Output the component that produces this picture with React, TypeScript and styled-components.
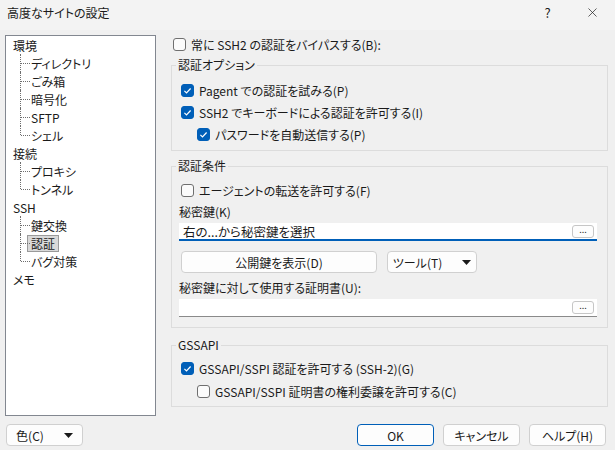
import React from "react";
import styled, { createGlobalStyle } from "styled-components";
import { X } from "lucide-react";

const GlobalStyle = createGlobalStyle`
  html, body {
    margin: 0;
    padding: 0;
    background: #f0f0f0;
  }
  body {
    font-family: "Noto Sans CJK JP", "Noto Sans", sans-serif;
    font-size: 12px;
    color: #1a1a1a;
    font-feature-settings: "palt";
  }
`;

type TreeNode = {
  label: string;
  children?: string[];
};

const treeData: TreeNode[] = [
  { label: "環境", children: ["ディレクトリ", "ごみ箱", "暗号化", "SFTP", "シェル"] },
  { label: "接続", children: ["プロキシ", "トンネル"] },
  { label: "SSH", children: ["鍵交換", "認証", "バグ対策"] },
  { label: "メモ" },
];

const SELECTED = "認証";

const CheckMark = () => (
  <svg width="13" height="13" viewBox="0 0 13 13">
    <path d="M3.4 6.9 L5.5 8.9 L9.6 4.5" fill="none" stroke="#fff" strokeWidth="1.2" />
  </svg>
);

const Caret = () => (
  <svg width="9" height="5" viewBox="0 0 9 5">
    <path d="M0 0 H9 L4.5 5 Z" fill="#1a1a1a" />
  </svg>
);

const CheckBox: React.FC<{ checked?: boolean }> = ({ checked }) => (
  <Box $checked={!!checked}>{checked && <CheckMark />}</Box>
);

const App: React.FC = () => {
  return (
    <Window>
      <GlobalStyle />
      <TitleBar>
        <Title>高度なサイトの設定</Title>
        <TitleButton>?</TitleButton>
        <TitleButton>
          <X size={15} strokeWidth={1.1} />
        </TitleButton>
      </TitleBar>

      <Body>
        <Tree>
          {treeData.map((node) => (
            <React.Fragment key={node.label}>
              <TreeRow>
                <TreeLabel $selected={false}>{node.label}</TreeLabel>
              </TreeRow>
              {node.children?.map((child, i) => (
                <TreeRow key={child} $child>
                  <Connector $last={i === node.children!.length - 1} />
                  <TreeLabel $selected={child === SELECTED}>{child}</TreeLabel>
                </TreeRow>
              ))}
            </React.Fragment>
          ))}
        </Tree>

        <RightPanel>
          <CheckRow $h={16} $top={1}>
            <CheckBox />
            常に SSH2 の認証をバイパスする(B):
          </CheckRow>

          <Group $top={5} $pt={6} $pb={5}>
            <Legend>認証オプション</Legend>
            <CheckRow>
              <CheckBox checked />
              Pagent での認証を試みる(P)
            </CheckRow>
            <CheckRow>
              <CheckBox checked />
              SSH2 でキーボードによる認証を許可する(I)
            </CheckRow>
            <CheckRow $indent={16}>
              <CheckBox checked />
              パスワードを自動送信する(P)
            </CheckRow>
          </Group>

          <Group $top={7} $pt={5} $pb={10}>
            <Legend>認証条件</Legend>
            <CheckRow>
              <CheckBox />
              エージェントの転送を許可する(F)
            </CheckRow>
            <FieldLabel>秘密鍵(K)</FieldLabel>
            <Field $focused>
              <FieldText>右の...から秘密鍵を選択</FieldText>
              <BrowseButton>...</BrowseButton>
            </Field>
            <ButtonRow>
              <Button $w={196}>公開鍵を表示(D)</Button>
              <Button $w={90}>
                <span>ツール(T)</span>
                <Caret />
              </Button>
            </ButtonRow>
            <FieldLabel $top={6}>秘密鍵に対して使用する証明書(U):</FieldLabel>
            <Field>
              <FieldText />
              <BrowseButton>...</BrowseButton>
            </Field>
          </Group>

          <Group $top={9} $pt={4} $pb={3}>
            <Legend>GSSAPI</Legend>
            <CheckRow $h={23}>
              <CheckBox checked />
              GSSAPI/SSPI 認証を許可する (SSH-2)(G)
            </CheckRow>
            <CheckRow $h={23} $indent={16}>
              <CheckBox />
              GSSAPI/SSPI 証明書の権利委譲を許可する(C)
            </CheckRow>
          </Group>
        </RightPanel>
      </Body>

      <Footer>
        <Button $w={77}>
          <span>色(C)</span>
          <Caret />
        </Button>
        <Spacer />
        <Button $w={77} $primary>
          OK
        </Button>
        <Button $w={77}>キャンセル</Button>
        <Button $w={77}>ヘルプ(H)</Button>
      </Footer>
    </Window>
  );
};

const Window = styled.div`
  width: 615px;
  height: 450px;
  display: flex;
  flex-direction: column;
  overflow: hidden;
  background: #f0f0f0;
`;

const TitleBar = styled.div`
  height: 30px;
  display: flex;
  align-items: center;
  background: #f3f3f3;
  padding-left: 7px;
`;

const Title = styled.div`
  flex: 1;
  font-size: 12px;
  margin-top: -5px;
`;

const TitleButton = styled.div`
  width: 45px;
  height: 30px;
  display: flex;
  align-items: center;
  justify-content: center;
  font-size: 13px;
  margin-top: -6px;
  color: #1a1a1a;
`;

const Body = styled.div`
  display: flex;
  gap: 15px;
  padding: 5px 7px 0 5px;
`;

const Tree = styled.div`
  width: 151px;
  height: 381px;
  box-sizing: border-box;
  background: #fff;
  border: 1px solid #828790;
  padding-left: 6px;
`;

const TreeRow = styled.div<{ $child?: boolean }>`
  height: 18px;
  display: flex;
  align-items: center;
  padding-left: ${(p) => (p.$child ? 8 : 0)}px;
`;

const Connector = styled.span<{ $last: boolean }>`
  position: relative;
  align-self: stretch;
  width: 10px;
  flex: none;

  &::before {
    content: "";
    position: absolute;
    left: 0;
    top: 0;
    height: ${(p) => (p.$last ? "50%" : "100%")};
    border-left: 1px dotted #6e6e6e;
  }

  &::after {
    content: "";
    position: absolute;
    left: 1px;
    top: 50%;
    width: 9px;
    border-top: 1px dotted #6e6e6e;
  }
`;

const TreeLabel = styled.span<{ $selected: boolean }>`
  height: 17px;
  line-height: 16px;
  padding: 0 3px;
  margin-left: -3px;
  box-sizing: border-box;
  border: 1px solid ${(p) => (p.$selected ? "#9a9a9a" : "transparent")};
  background: ${(p) => (p.$selected ? "#d9d9d9" : "transparent")};
  font-size: 12px;
  white-space: nowrap;
`;

const RightPanel = styled.div`
  width: 437px;
  display: flex;
  flex-direction: column;
`;

const CheckRow = styled.label<{ $h?: number; $indent?: number; $top?: number }>`
  display: flex;
  align-items: center;
  gap: 5px;
  height: ${(p) => p.$h ?? 22}px;
  margin-top: ${(p) => p.$top ?? 0}px;
  padding-left: ${(p) => 2 + (p.$indent ?? 0)}px;
  font-size: 12px;
  white-space: nowrap;
`;

const Box = styled.span<{ $checked: boolean }>`
  width: 13px;
  height: 13px;
  box-sizing: border-box;
  flex: none;
  border-radius: 3px;
  display: flex;
  align-items: center;
  justify-content: center;
  background: ${(p) => (p.$checked ? "#005fb8" : "#fbfbfb")};
  border: 1px solid ${(p) => (p.$checked ? "#005fb8" : "#6f6f6f")};

  svg {
    flex: none;
  }
`;

const Group = styled.fieldset<{ $top: number; $pt: number; $pb: number }>`
  margin: ${(p) => p.$top}px 0 0 0;
  padding: ${(p) => p.$pt}px 10px ${(p) => p.$pb}px 7px;
  border: 1px solid #dcdcdc;
  min-width: 0;
  display: flex;
  flex-direction: column;
`;

const Legend = styled.legend`
  padding: 0 2px;
  margin-left: -3px;
  line-height: 16px;
  font-size: 12px;
`;

const FieldLabel = styled.div<{ $top?: number }>`
  height: 18px;
  line-height: 18px;
  margin-top: ${(p) => p.$top ?? 2}px;
  font-size: 12px;
`;

const Field = styled.div<{ $focused?: boolean }>`
  height: 18px;
  margin-top: 2px;
  box-sizing: border-box;
  display: flex;
  align-items: center;
  background: #fff;
  border-bottom: ${(p) => (p.$focused ? "2px solid #005fb8" : "1px solid #8a8a8a")};
  padding: ${(p) => (p.$focused ? "1px 3px 0 4px" : "0 3px 0 4px")};
`;

const FieldText = styled.span`
  flex: 1;
  font-size: 12.5px;
  white-space: nowrap;
`;

const BrowseButton = styled.span`
  width: 22px;
  height: 13px;
  box-sizing: border-box;
  border: 1px solid #c6c6c6;
  border-radius: 3px;
  background: #fdfdfd;
  font-size: 9px;
  line-height: 8px;
  text-align: center;
  color: #333;
`;

const ButtonRow = styled.div`
  display: flex;
  gap: 10px;
  margin-top: 10px;
  padding-left: 2px;
`;

const Button = styled.div<{ $w: number; $primary?: boolean }>`
  width: ${(p) => p.$w}px;
  height: 22px;
  box-sizing: border-box;
  display: flex;
  align-items: center;
  justify-content: center;
  gap: 20px;
  background: #fdfdfd;
  border: 1px solid ${(p) => (p.$primary ? "#005fb8" : "#d0d0d0")};
  border-radius: 4px;
  font-size: 12px;
  white-space: nowrap;
`;

const Footer = styled.div`
  display: flex;
  gap: 9px;
  padding: 8px 9px 0 6px;
`;

const Spacer = styled.div`
  flex: 1;
`;

export default App;
